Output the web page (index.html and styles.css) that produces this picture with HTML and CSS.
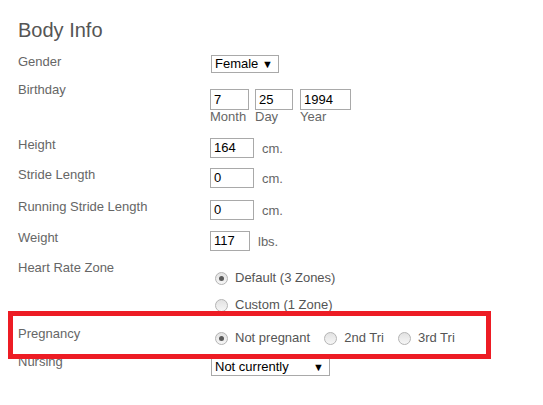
FILE: index.html
```html
<!DOCTYPE html>
<html>
<head>
<meta charset="utf-8">
<link rel="stylesheet" href="styles.css">
</head>
<body>
<div class="page">
  <h2 class="title">Body Info</h2>

  <div class="row row-gender">
    <div class="label">Gender</div>
    <div class="control">
      <div class="select select-gender"><span>Female</span><span class="arrow">▼</span></div>
    </div>
  </div>

  <div class="row row-birthday">
    <div class="label">Birthday</div>
    <div class="control date">
      <div class="date-part"><div class="input w-month">7</div><div class="sub">Month</div></div>
      <div class="date-part"><div class="input w-day">25</div><div class="sub">Day</div></div>
      <div class="date-part"><div class="input w-year">1994</div><div class="sub">Year</div></div>
    </div>
  </div>

  <div class="row row-measure">
    <div class="label">Height</div>
    <div class="control inline"><div class="input w-num">164</div><span class="unit">cm.</span></div>
  </div>

  <div class="row row-measure2">
    <div class="label">Stride Length</div>
    <div class="control inline"><div class="input w-num">0</div><span class="unit">cm.</span></div>
  </div>

  <div class="row row-measure3">
    <div class="label">Running Stride Length</div>
    <div class="control inline"><div class="input w-num">0</div><span class="unit">cm.</span></div>
  </div>

  <div class="row row-measure4">
    <div class="label">Weight</div>
    <div class="control inline"><div class="input w-weight">117</div><span class="unit unit-lbs">lbs.</span></div>
  </div>

  <div class="row row-hrz">
    <div class="label">Heart Rate Zone</div>
    <div class="control options-col">
      <div class="option"><span class="radio checked"></span>Default (3 Zones)</div>
      <div class="option"><span class="radio"></span>Custom (1 Zone)</div>
    </div>
  </div>

  <div class="row row-preg">
    <div class="label">Pregnancy</div>
    <div class="control options-row">
      <div class="option"><span class="radio checked"></span>Not pregnant</div>
      <div class="option"><span class="radio"></span>2nd Tri</div>
      <div class="option"><span class="radio"></span>3rd Tri</div>
    </div>
  </div>

  <div class="row row-nursing">
    <div class="label">Nursing</div>
    <div class="control">
      <div class="select select-nursing"><span>Not currently</span><span class="arrow">▼</span></div>
    </div>
  </div>

  <div class="highlight"></div>
</div>
</body>
</html>
```

FILE: styles.css
```css
html, body {
  margin: 0;
  padding: 0;
  background: #ffffff;
}

body {
  font-family: "Liberation Sans", Arial, sans-serif;
  font-size: 13px;
  color: #666666;
  width: 543px;
  height: 405px;
  overflow: hidden;
}

.page {
  position: relative;
  padding-left: 18px;
  padding-top: 18px;
}

.title {
  margin: 0 0 12px 0;
  font-size: 20px;
  line-height: 24px;
  font-weight: normal;
  color: #555555;
}

.row {
  display: flex;
  align-items: flex-start;
}

.label {
  width: 192px;
  flex: none;
  line-height: 16px;
  color: #666666;
}

.control {
  flex: none;
}

.row-gender { height: 28px; }
.row-gender .control { padding-top: 1px; }

.row-birthday { height: 55px; }
.row-birthday .control { padding-top: 7px; }

.row-measure { height: 30px; }
.row-measure2 { height: 32px; }
.row-measure3 { height: 31px; }
.row-measure4 { height: 30px; }
.row-measure .control,
.row-measure2 .control,
.row-measure3 .control,
.row-measure4 .control { padding-top: 1px; }

.row-hrz { height: 66px; }
.row-preg { height: 28px; }
.row-nursing .control { padding-top: 4px; }

.select {
  box-sizing: border-box;
  height: 18px;
  margin-left: 1px;
  border: 1px solid #a9a9a9;
  display: flex;
  align-items: center;
  justify-content: space-between;
  padding: 0 5px 0 3px;
  color: #000000;
  font-size: 13px;
  line-height: 16px;
  background: #ffffff;
}

.select-gender { width: 68px; }
.select-nursing { width: 119px; }

.arrow {
  font-size: 11px;
  color: #000000;
}

.input {
  box-sizing: border-box;
  height: 21px;
  border: 1px solid #a9a9a9;
  padding: 0 3px;
  line-height: 19px;
  color: #000000;
  font-size: 13px;
  background: #ffffff;
}

.row-measure .input,
.row-measure2 .input,
.row-measure3 .input,
.row-measure4 .input { height: 20px; line-height: 18px; }

.w-month { width: 39px; }
.w-day { width: 38px; }
.w-year { width: 51px; }
.w-num { width: 44px; }
.w-weight { width: 40px; }

.date {
  display: flex;
  gap: 6px;
}

.date-part + .date-part + .date-part { margin-left: 1px; }

.sub {
  line-height: 14px;
  color: #666666;
}

.inline {
  display: flex;
  align-items: center;
}

.unit {
  margin-left: 8px;
  color: #666666;
}

.unit-lbs { margin-left: 8px; }

.options-col {
  display: flex;
  flex-direction: column;
  gap: 11px;
  padding-top: 10px;
}

.options-row {
  display: flex;
  gap: 9px;
  padding-top: 4px;
}

.option {
  display: flex;
  align-items: center;
  line-height: 16px;
  color: #555555;
}

.radio {
  box-sizing: border-box;
  width: 13px;
  height: 13px;
  margin: 0 7px 0 5px;
  border-radius: 50%;
  border: 1px solid #b4b4b4;
  background: linear-gradient(#e2e2e2, #f6f6f6);
  position: relative;
  flex: none;
}

.radio.checked::after {
  content: "";
  position: absolute;
  left: 3px;
  top: 3px;
  width: 5px;
  height: 5px;
  border-radius: 50%;
  background: #5a5a5a;
}

.highlight {
  position: absolute;
  left: 8px;
  top: 311px;
  width: 483px;
  height: 48px;
  box-sizing: border-box;
  border: 5px solid #ed1c24;
}
```
